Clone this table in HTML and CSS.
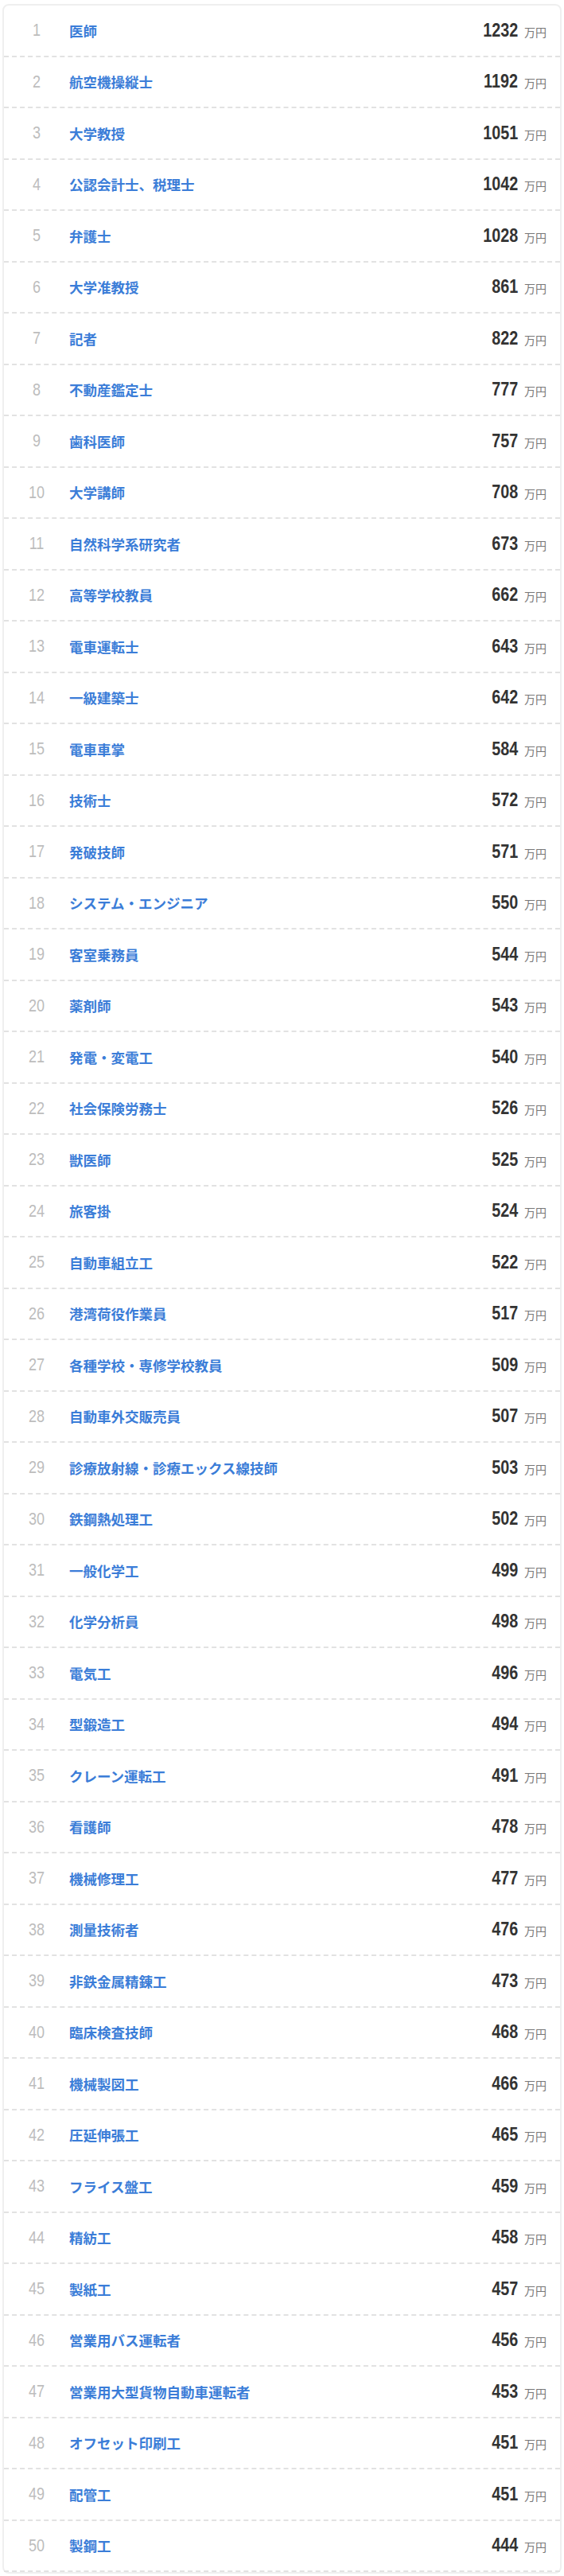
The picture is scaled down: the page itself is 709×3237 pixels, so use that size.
FILE: index.html
```html
<!DOCTYPE html>
<html lang="ja">
<head>
<meta charset="utf-8">
<link rel="stylesheet" href="styles.css">
</head>
<body>
<ul class="ranking">
<li class="row"><span class="rank">1</span><a class="job">医師</a><span class="salary"><span class="num">1232</span><span class="unit">万円</span></span></li>
<li class="row"><span class="rank">2</span><a class="job">航空機操縦士</a><span class="salary"><span class="num">1192</span><span class="unit">万円</span></span></li>
<li class="row"><span class="rank">3</span><a class="job">大学教授</a><span class="salary"><span class="num">1051</span><span class="unit">万円</span></span></li>
<li class="row"><span class="rank">4</span><a class="job">公認会計士、税理士</a><span class="salary"><span class="num">1042</span><span class="unit">万円</span></span></li>
<li class="row"><span class="rank">5</span><a class="job">弁護士</a><span class="salary"><span class="num">1028</span><span class="unit">万円</span></span></li>
<li class="row"><span class="rank">6</span><a class="job">大学准教授</a><span class="salary"><span class="num">861</span><span class="unit">万円</span></span></li>
<li class="row"><span class="rank">7</span><a class="job">記者</a><span class="salary"><span class="num">822</span><span class="unit">万円</span></span></li>
<li class="row"><span class="rank">8</span><a class="job">不動産鑑定士</a><span class="salary"><span class="num">777</span><span class="unit">万円</span></span></li>
<li class="row"><span class="rank">9</span><a class="job">歯科医師</a><span class="salary"><span class="num">757</span><span class="unit">万円</span></span></li>
<li class="row"><span class="rank">10</span><a class="job">大学講師</a><span class="salary"><span class="num">708</span><span class="unit">万円</span></span></li>
<li class="row"><span class="rank">11</span><a class="job">自然科学系研究者</a><span class="salary"><span class="num">673</span><span class="unit">万円</span></span></li>
<li class="row"><span class="rank">12</span><a class="job">高等学校教員</a><span class="salary"><span class="num">662</span><span class="unit">万円</span></span></li>
<li class="row"><span class="rank">13</span><a class="job">電車運転士</a><span class="salary"><span class="num">643</span><span class="unit">万円</span></span></li>
<li class="row"><span class="rank">14</span><a class="job">一級建築士</a><span class="salary"><span class="num">642</span><span class="unit">万円</span></span></li>
<li class="row"><span class="rank">15</span><a class="job">電車車掌</a><span class="salary"><span class="num">584</span><span class="unit">万円</span></span></li>
<li class="row"><span class="rank">16</span><a class="job">技術士</a><span class="salary"><span class="num">572</span><span class="unit">万円</span></span></li>
<li class="row"><span class="rank">17</span><a class="job">発破技師</a><span class="salary"><span class="num">571</span><span class="unit">万円</span></span></li>
<li class="row"><span class="rank">18</span><a class="job">システム・エンジニア</a><span class="salary"><span class="num">550</span><span class="unit">万円</span></span></li>
<li class="row"><span class="rank">19</span><a class="job">客室乗務員</a><span class="salary"><span class="num">544</span><span class="unit">万円</span></span></li>
<li class="row"><span class="rank">20</span><a class="job">薬剤師</a><span class="salary"><span class="num">543</span><span class="unit">万円</span></span></li>
<li class="row"><span class="rank">21</span><a class="job">発電・変電工</a><span class="salary"><span class="num">540</span><span class="unit">万円</span></span></li>
<li class="row"><span class="rank">22</span><a class="job">社会保険労務士</a><span class="salary"><span class="num">526</span><span class="unit">万円</span></span></li>
<li class="row"><span class="rank">23</span><a class="job">獣医師</a><span class="salary"><span class="num">525</span><span class="unit">万円</span></span></li>
<li class="row"><span class="rank">24</span><a class="job">旅客掛</a><span class="salary"><span class="num">524</span><span class="unit">万円</span></span></li>
<li class="row"><span class="rank">25</span><a class="job">自動車組立工</a><span class="salary"><span class="num">522</span><span class="unit">万円</span></span></li>
<li class="row"><span class="rank">26</span><a class="job">港湾荷役作業員</a><span class="salary"><span class="num">517</span><span class="unit">万円</span></span></li>
<li class="row"><span class="rank">27</span><a class="job">各種学校・専修学校教員</a><span class="salary"><span class="num">509</span><span class="unit">万円</span></span></li>
<li class="row"><span class="rank">28</span><a class="job">自動車外交販売員</a><span class="salary"><span class="num">507</span><span class="unit">万円</span></span></li>
<li class="row"><span class="rank">29</span><a class="job">診療放射線・診療エックス線技師</a><span class="salary"><span class="num">503</span><span class="unit">万円</span></span></li>
<li class="row"><span class="rank">30</span><a class="job">鉄鋼熱処理工</a><span class="salary"><span class="num">502</span><span class="unit">万円</span></span></li>
<li class="row"><span class="rank">31</span><a class="job">一般化学工</a><span class="salary"><span class="num">499</span><span class="unit">万円</span></span></li>
<li class="row"><span class="rank">32</span><a class="job">化学分析員</a><span class="salary"><span class="num">498</span><span class="unit">万円</span></span></li>
<li class="row"><span class="rank">33</span><a class="job">電気工</a><span class="salary"><span class="num">496</span><span class="unit">万円</span></span></li>
<li class="row"><span class="rank">34</span><a class="job">型鍛造工</a><span class="salary"><span class="num">494</span><span class="unit">万円</span></span></li>
<li class="row"><span class="rank">35</span><a class="job">クレーン運転工</a><span class="salary"><span class="num">491</span><span class="unit">万円</span></span></li>
<li class="row"><span class="rank">36</span><a class="job">看護師</a><span class="salary"><span class="num">478</span><span class="unit">万円</span></span></li>
<li class="row"><span class="rank">37</span><a class="job">機械修理工</a><span class="salary"><span class="num">477</span><span class="unit">万円</span></span></li>
<li class="row"><span class="rank">38</span><a class="job">測量技術者</a><span class="salary"><span class="num">476</span><span class="unit">万円</span></span></li>
<li class="row"><span class="rank">39</span><a class="job">非鉄金属精錬工</a><span class="salary"><span class="num">473</span><span class="unit">万円</span></span></li>
<li class="row"><span class="rank">40</span><a class="job">臨床検査技師</a><span class="salary"><span class="num">468</span><span class="unit">万円</span></span></li>
<li class="row"><span class="rank">41</span><a class="job">機械製図工</a><span class="salary"><span class="num">466</span><span class="unit">万円</span></span></li>
<li class="row"><span class="rank">42</span><a class="job">圧延伸張工</a><span class="salary"><span class="num">465</span><span class="unit">万円</span></span></li>
<li class="row"><span class="rank">43</span><a class="job">フライス盤工</a><span class="salary"><span class="num">459</span><span class="unit">万円</span></span></li>
<li class="row"><span class="rank">44</span><a class="job">精紡工</a><span class="salary"><span class="num">458</span><span class="unit">万円</span></span></li>
<li class="row"><span class="rank">45</span><a class="job">製紙工</a><span class="salary"><span class="num">457</span><span class="unit">万円</span></span></li>
<li class="row"><span class="rank">46</span><a class="job">営業用バス運転者</a><span class="salary"><span class="num">456</span><span class="unit">万円</span></span></li>
<li class="row"><span class="rank">47</span><a class="job">営業用大型貨物自動車運転者</a><span class="salary"><span class="num">453</span><span class="unit">万円</span></span></li>
<li class="row"><span class="rank">48</span><a class="job">オフセット印刷工</a><span class="salary"><span class="num">451</span><span class="unit">万円</span></span></li>
<li class="row"><span class="rank">49</span><a class="job">配管工</a><span class="salary"><span class="num">451</span><span class="unit">万円</span></span></li>
<li class="row"><span class="rank">50</span><a class="job">製鋼工</a><span class="salary"><span class="num">444</span><span class="unit">万円</span></span></li>
</ul>
</body>
</html>
```
FILE: styles.css
```css
html, body {
  margin: 0;
  padding: 0;
  background: #fff;
}

body {
  font-family: "Liberation Sans", "Noto Sans CJK JP", sans-serif;
}

.ranking {
  list-style: none;
  margin: 5px 3px 0;
  padding: 0;
  border: 2px solid #efefef;
  border-radius: 8px;
}

.row {
  display: flex;
  align-items: center;
  height: 62.5px;
  padding-right: 17px;
  border-bottom: 2px dashed #e2e2e2;
}

.rank {
  flex: 0 0 82px;
  text-align: center;
  font-family: "Liberation Sans", sans-serif;
  font-size: 22px;
  color: #bdbdbd;
  transform: scaleX(0.82);
}

.job {
  flex: 1 1 auto;
  font-family: "Noto Sans CJK JP", sans-serif;
  font-size: 17.5px;
  font-weight: 700;
  color: #3b7dd8;
}

.salary {
  display: flex;
  align-items: baseline;
  gap: 8px;
}

.num {
  display: inline-block;
  font-family: "Liberation Sans", sans-serif;
  font-size: 23px;
  font-weight: 700;
  color: #333;
  transform: scaleX(0.86);
  transform-origin: right center;
}

.unit {
  font-family: "Noto Sans CJK JP", sans-serif;
  font-size: 14px;
  color: #777;
}
```
